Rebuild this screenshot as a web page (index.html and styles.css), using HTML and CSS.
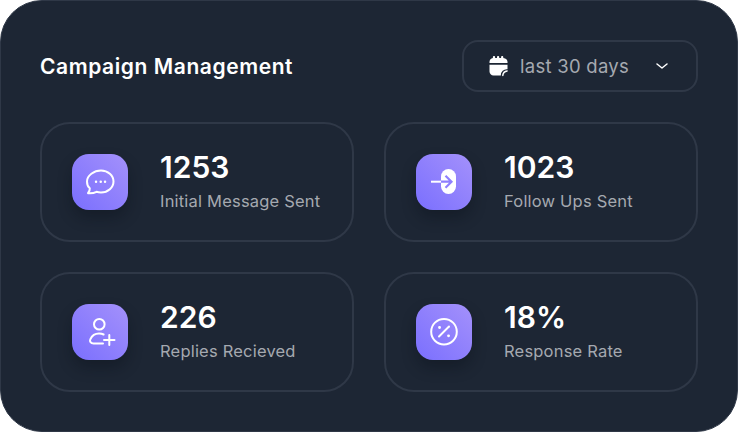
FILE: index.html
```html
<!DOCTYPE html>
<html lang="en">

<head>
    <meta charset="UTF-8" />
    <title>Campaign Management</title>
    <link rel="stylesheet" href="styles.css">
</head>

<body>
    <div class="panel">
        <div class="panel-head">
            <h1>Campaign Management</h1>
            <div class="range-select">
                <svg class="cal-icon" width="19" height="22" viewBox="0 0 19 22">
                    <path fill="#fff" d="M5 1c.7 0 1.100.5 1.100 1.100V3h1.900v-.9C8 1.500 8.500 1 9.100 1s1.100.5 1.100 1.100V3h1.900v-.9c0-.6.5-1.100 1.100-1.100s1.100.5 1.100 1.100V3C17 3.200 18.500 4.800 18.500 6.800V8H.5V6.800C.5 4.800 2 3.200 3.900 3v-.9C3.900 1.500 4.400 1 5 1z" />
                    <path fill="#fff" d="M.5 9.800h18v4.400a6 6 0 0 0-6.700 6.300H4.500c-2.200 0-4-1.800-4-4z" />
                    <path fill="none" stroke="#fff" stroke-width="1.500" stroke-linecap="round" d="M13.800 20.400c.2-2.500 1.900-4.200 4.300-4.500" />
                </svg>
                <span class="range-label">last 30 days</span>
                <svg class="chevron" width="14" height="14" viewBox="0 0 14 14">
                    <path fill="none" stroke="#fff" stroke-width="1.500" stroke-linecap="round" stroke-linejoin="round" d="M2 5l5 4 5-4" />
                </svg>
            </div>
        </div>

        <div class="stat-grid">
            <div class="stat-card">
                <div class="stat-icon">
                    <svg width="32" height="32" viewBox="0 0 32 32" fill="none" stroke="#fff" stroke-width="2" stroke-linecap="round" stroke-linejoin="round">
                        <path d="M17 4.500C24 4.500 29.500 9.500 29.500 15.500S24 26.500 17 26.500c-1.600 0-3.100-.2-4.500-.7-2.500 1.300-5.200 1.700-8.500 1.400 1.300-1.500 2-3.200 1.800-5C3.800 20.800 3 18.300 3 15.500 3 9.500 10 4.500 17 4.500z" />
                        <path d="M12 15.700h.1M16.700 15.700h.1M21 15.700h.1" stroke-width="2.400" />
                    </svg>
                </div>
                <div class="stat-text">
                    <div class="stat-value">1253</div>
                    <div class="stat-label">Initial Message Sent</div>
                </div>
            </div>

            <div class="stat-card">
                <div class="stat-icon">
                    <svg width="32" height="32" viewBox="0 0 32 32">
                        <rect x="13" y="3" width="15" height="25" rx="7.500" fill="#fff" />
                        <path d="M3 15.700h10" fill="none" stroke="#fff" stroke-width="2" />
                        <path d="M13 15.700h10M17.500 9.700l6 6-6 6" fill="none" stroke="#8f80fe" stroke-width="2.200" />
                    </svg>
                </div>
                <div class="stat-text">
                    <div class="stat-value">1023</div>
                    <div class="stat-label">Follow Ups Sent</div>
                </div>
            </div>

            <div class="stat-card">
                <div class="stat-icon">
                    <svg width="32" height="32" viewBox="0 0 32 32" fill="none" stroke="#fff" stroke-width="2" stroke-linecap="round" stroke-linejoin="round">
                        <circle cx="15.300" cy="8.300" r="5.300" />
                        <path d="M19 27.500H9.500c-2.700 0-4.200-2-3.200-4.200C7.800 20 11 17.500 15 17.500c1.700 0 3.300.3 4.600 1" />
                        <path d="M25.300 19v10M20 24h10.500" />
                    </svg>
                </div>
                <div class="stat-text">
                    <div class="stat-value">226</div>
                    <div class="stat-label">Replies Recieved</div>
                </div>
            </div>

            <div class="stat-card">
                <div class="stat-icon">
                    <svg width="32" height="32" viewBox="0 0 32 32" fill="none" stroke="#fff" stroke-width="2" stroke-linecap="round" stroke-linejoin="round">
                        <circle cx="16" cy="15.700" r="12.800" />
                        <path d="M11 20.500l10-10" />
                        <path d="M11.500 11.500h.1M20.500 19.800h.1" stroke-width="2.800" />
                    </svg>
                </div>
                <div class="stat-text">
                    <div class="stat-value">18%</div>
                    <div class="stat-label">Response Rate</div>
                </div>
            </div>
        </div>
    </div>
</body>

</html>
```

FILE: styles.css
```css
:root {
    --panel-bg: #1d2634;
    --line: #2f3847;
    --muted: #a5a9b0;
}

* {
    box-sizing: border-box;
}

body {
    font-family: 'Inter', 'Liberation Sans', sans-serif;
    background: #ffffff;
    margin: 0;
}

.panel {
    width: 738px;
    height: 432px;
    padding: 39px 39px 0;
    background: var(--panel-bg);
    border: 1px solid var(--line);
    border-radius: 42px;
}

.panel-head {
    display: flex;
    justify-content: space-between;
    align-items: center;
    margin-bottom: 30px;
}

h1 {
    margin: 0;
    color: #ffffff;
    font-size: 21px;
    font-weight: 600;
    letter-spacing: 0.58px;
}

.range-select {
    width: 236px;
    height: 52px;
    padding: 0 27px 0 25px;
    display: flex;
    align-items: center;
    border: 2px solid var(--line);
    border-radius: 16px;
}

.cal-icon {
    margin-right: 12px;
}

.range-label {
    flex: 1;
    color: var(--muted);
    font-size: 18.500px;
    letter-spacing: 0.27px;
}

.stat-grid {
    display: grid;
    grid-template-columns: 314px 314px;
    grid-auto-rows: 120px;
    gap: 30px;
}

.stat-card {
    display: flex;
    align-items: center;
    gap: 32px;
    padding-left: 30px;
    border: 2px solid var(--line);
    border-radius: 30px;
}

.stat-icon {
    width: 56px;
    height: 56px;
    display: flex;
    align-items: center;
    justify-content: center;
    border-radius: 17px;
    background: linear-gradient(45deg, #7a6ffe, #a491fb);
    box-shadow: 0 8px 14px rgba(10, 14, 24, 0.35);
}

.stat-text {
    padding-bottom: 4px;
}

.stat-value {
    color: #ffffff;
    font-size: 30px;
    font-weight: 600;
    line-height: 38px;
}

.stat-label {
    margin-top: 3px;
    color: var(--muted);
    font-size: 16.500px;
    line-height: 24px;
    letter-spacing: 0.2px;
}
```
